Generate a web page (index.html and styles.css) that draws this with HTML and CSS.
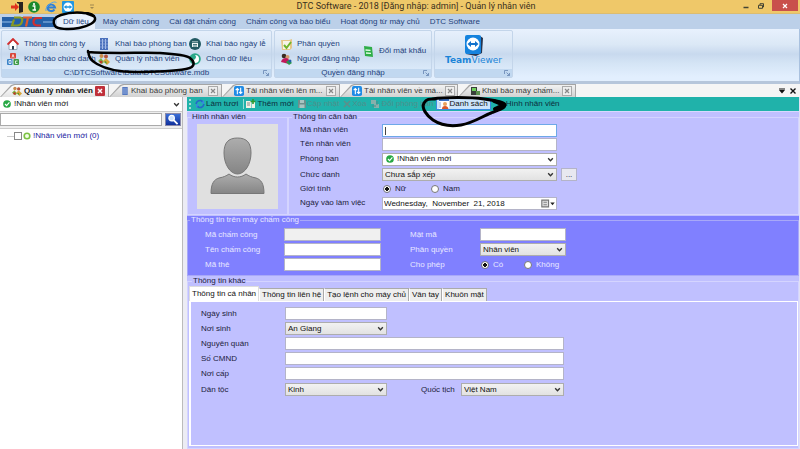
FILE: index.html
```html
<!DOCTYPE html>
<html lang="vi">
<head>
<meta charset="utf-8">
<title>DTC Software - 2018</title>
<link rel="stylesheet" href="styles.css">
</head>
<body>
<svg class="defs" aria-hidden="true">
  <symbol id="chev" viewBox="0 0 6 6"><path d="M1 2l2 2 2-2" fill="none" stroke="#333" stroke-width="1.2"/></symbol>
  <symbol id="people" viewBox="0 0 12 12"><circle cx="3.500" cy="3" r="2" fill="#c98a4a"/><circle cx="8" cy="3.500" r="2" fill="#b5523a"/><path d="M0 8l3-3 3 4-2 2z" fill="#7cb342"/><path d="M5 8l3-3 4 4-3 3z" fill="#d9a53a"/><circle cx="3" cy="9" r="1.500" fill="#c0392b"/><path d="M6 9l2-1 1 3z" fill="#4c9a2a"/></symbol>
  <symbol id="building" viewBox="0 0 12 12"><path d="M2 0h8v12H2z" fill="#4a70bc"/><path d="M4.500 1v10M7.500 1v10" stroke="#c4d6f4" stroke-width=".8"/><path d="M2 3h8M2 6h8M2 9h8" stroke="#8fabdf" stroke-width=".7"/></symbol>
  <symbol id="updown" viewBox="0 0 12 12"><rect width="12" height="12" rx="2" fill="#1f8be6"/><path d="M4 10V3M2 5l2-2 2 2M8 2v7M6 7l2 2 2-2" fill="none" stroke="#fff" stroke-width="1.300"/></symbol>
  <symbol id="xbox" viewBox="0 0 10 10"><rect x=".5" y=".5" width="9" height="9" fill="#eee" stroke="#aaa"/><path d="M3 3l4 4M7 3l-4 4" stroke="#888" stroke-width="1.200"/></symbol>
  <symbol id="ok" viewBox="0 0 10 10"><circle cx="5" cy="5" r="4.800" fill="#27a844"/><path d="M2.500 5l2 2 3.500-4" fill="none" stroke="#fff" stroke-width="1.400"/></symbol>
  <symbol id="launch" viewBox="0 0 6 6"><path d="M.5 4V.5H4M2.500 2.500l3 3M5.500 3v2.500H3" fill="none" stroke="#6f8db8" stroke-width=".9"/></symbol>
</svg>

<header class="titlebar">
  <div class="quick">
    <svg class="i12" viewBox="0 0 12 12"><path d="M6 1h6v10l-4 1V3L6 2z" fill="#2b2420"/><path d="M0 4.500h4V2l4 4-4 4V7.500H0z" fill="#e0321e"/></svg>
    <svg class="i12" viewBox="0 0 12 12"><circle cx="6" cy="6" r="5.800" fill="#1d8a2c"/><circle cx="6" cy="3" r="1.100" fill="#fff"/><path d="M4.500 5h2.300v4H8M4.500 9h3" fill="none" stroke="#fff" stroke-width="1.300"/></svg>
    <svg class="i12" viewBox="0 0 12 12"><path d="M3 6.500h7A4 4 0 0 0 2.500 6c-.3 4 4.500 5.500 7 2.500" fill="none" stroke="#2f7fd6" stroke-width="2"/><path d="M1 10C-.5 6 8-1 11.500 1.500" fill="none" stroke="#58a4e8"/></svg>
    <svg class="i12" viewBox="0 0 12 12"><rect width="12" height="12" rx="1" fill="#2196e0"/><circle cx="6" cy="6" r="4.500" fill="#fff"/><path d="M1.800 6L4.500 4v1.300h3V4l2.700 2-2.700 2V6.700h-3V8z" fill="#2196e0"/></svg>
    <svg class="i6 more" viewBox="0 0 6 6"><path d="M1 1h4" stroke="#a08850"/><path d="M1 3h4L3 5z" fill="#a08850"/></svg>
  </div>
  <h1>DTC Software - 2018 [Đăng nhập: admin] - Quản lý nhân viên</h1>
  <div class="winbtns">
    <button aria-label="Thu nhỏ"><svg class="i6" viewBox="0 0 6 6"><path d="M.5 4.500h5" stroke="#443" stroke-width="1.500"/></svg></button>
    <button aria-label="Khôi phục"><svg class="i6" viewBox="0 0 6 6"><path d="M2 2V.7h3.500V4H4.500M.5 2.300h4v3h-4z" fill="none" stroke="#443"/></svg></button>
    <button class="close" aria-label="Đóng"><svg class="i6" viewBox="0 0 6 6"><path d="M1 1l4 4M5 1L1 5" stroke="#fff" stroke-width="1.200"/></svg></button>
  </div>
</header>

<nav class="menu">
  <svg class="logo" viewBox="0 0 52 15"><path d="M0 3h52v10H0z" fill="#2460a8"/><path d="M0 8h11M41 8h11" stroke="#6f9fd4" stroke-width="1.500"/><g fill="none" stroke-width="2.200"><path d="M12 3.500h6q3 0 2 4t-5 4h-5l2-6" stroke="#8a9a20"/><path d="M21 3.500h9M26 3.500l-2 9" stroke="#e2592a"/><path d="M40 4h-5q-3 0-3.500 3.500T35 11.500h4" stroke="#d32f2f"/></g></svg>
  <a href="#" class="on">Dữ liệu</a><a href="#">Máy chấm công</a><a href="#">Cài đặt chấm công</a><a href="#">Chấm công và báo biểu</a><a href="#">Hoạt động từ máy chủ</a><a href="#">DTC Software</a>
</nav>

<section class="ribbon">
  <div class="rgroup g1">
    <div class="cmds three">
      <button><svg class="i12" viewBox="0 0 12 12"><path d="M2 6v5.500h8V6L6 2z" fill="#fff" stroke="#9ab"/><path d="M.5 6.500L6 1l5.500 5.500" fill="none" stroke="#d32f2f" stroke-width="1.800"/><path d="M5 8h2v3.500H5z" fill="#2d3e50"/></svg>Thông tin công ty</button>
      <button><svg class="i12"><use href="#building"/></svg>Khai báo phòng ban</button>
      <button><svg class="i12" viewBox="0 0 12 12"><circle cx="6" cy="6" r="6" fill="#235a63"/><rect x="3" y="3.500" width="6" height="5.500" fill="#eef6f6"/><path d="M3 4.500h6M4 6.500h4M4 8h4" stroke="#235a63" stroke-width=".8"/></svg>Khai báo ngày lễ</button>
      <button><svg class="i12" viewBox="0 0 12 12"><rect x="3" width="6" height="5.500" rx="1" fill="#d9453a"/><rect y="6" width="5.500" height="6" rx="1" fill="#3b84c8"/><rect x="6.500" y="6" width="5.500" height="6" rx="1" fill="#3d9b46"/><path d="M5 4.500L6 1.500l1 3M2 7.500v3h2v-3zM10.500 8H8.500v2.500h2" fill="none" stroke="#fff" stroke-width=".8"/></svg>Khai báo chức danh</button>
      <button><svg class="i12"><use href="#people"/></svg>Quản lý nhân viên</button>
      <button><svg class="i12" viewBox="0 0 12 12"><circle cx="6" cy="6" r="5.800" fill="#2aa889"/><path d="M6 2a4 4 0 0 1 0 8q-2-2 0-4t0-4" fill="#fff"/><circle cx="5" cy="8" r="1.500" fill="#fff"/></svg>Chọn dữ liệu</button>
    </div>
    <footer>C:\DTCSoftware\Data\DTCSoftware.mdb<svg class="i6"><use href="#launch"/></svg></footer>
  </div>
  <div class="rgroup g2">
    <div class="cmds two">
      <button><svg class="i12" viewBox="0 0 12 12"><path d="M1 2h8l3-1v9l-2 2H2z" fill="#e5c88a"/><path d="M3 3h7v8H3z" fill="#f7f4e8"/><path d="M4 7l2.500 3L11 4" fill="none" stroke="#6fb52c" stroke-width="2"/></svg>Phân quyền</button>
      <button class="mid"><svg class="i12" viewBox="0 0 12 12"><path d="M2 1l8 1 1 10-8-1z" fill="#2fae48"/><path d="M3.500 5l5 .3M4 8l5 .3" stroke="#e6ffe8" stroke-width="1.300"/></svg>Đổi mật khẩu</button>
      <button><svg class="i12" viewBox="0 0 12 12"><circle cx="4" cy="3" r="2.300" fill="#3a2a20"/><circle cx="7.500" cy="4" r="2" fill="#d69a6a"/><path d="M1 9q1-4 5-4t3 6z" fill="#c2185b"/><path d="M6 9l3-2 3 3-3 2z" fill="#2a9a4a"/><circle cx="10" cy="8" r="1.500" fill="#1f5fa8"/></svg>Người đăng nhập</button>
    </div>
    <footer>Quyền đăng nhập<svg class="i6"><use href="#launch"/></svg></footer>
  </div>
  <div class="rgroup g3">
    <button class="tv">
      <svg viewBox="0 0 20 22"><path d="M16 2l3 2-1 15-6 3-10-2z" fill="#26354f"/><rect x="1" y="1" width="16" height="19" rx="2" fill="#1583de"/><circle cx="9" cy="10" r="6.500" fill="#fff"/><path d="M3.500 10L7 7v2h4V7l3.500 3-3.500 3v-2H7v2z" fill="#1273cc"/></svg>
      <span><b>Team</b>Viewer</span>
    </button>
    <footer><svg class="i6"><use href="#launch"/></svg></footer>
  </div>
</section>

<nav class="doctabs">
  <a href="#" class="tab on"><svg class="i10"><use href="#people"/></svg><span>Quản lý nhân viên</span><svg class="i10" viewBox="0 0 10 10"><rect width="10" height="10" rx="1" fill="#c0303a"/><path d="M3 3l4 4M7 3l-4 4" stroke="#fff" stroke-width="1.500"/></svg></a>
  <a href="#" class="tab"><svg class="i8"><use href="#building"/></svg><span>Khai báo phòng ban</span><svg class="i10"><use href="#xbox"/></svg></a>
  <a href="#" class="tab"><svg class="i10"><use href="#updown"/></svg><span>Tải nhân viên lên m...</span><svg class="i10"><use href="#xbox"/></svg></a>
  <a href="#" class="tab"><svg class="i10"><use href="#updown"/></svg><span>Tải nhân viên về má...</span><svg class="i10"><use href="#xbox"/></svg></a>
  <a href="#" class="tab"><svg class="i10" viewBox="0 0 10 10"><path d="M1 1h6v8H1z" fill="#3a3f3a"/><path d="M2 2h4v3H2z" fill="#6fd05a"/><path d="M6 5h4v4H6z" fill="#5b8f4e"/></svg><span>Khai báo máy chấm...</span><svg class="i10"><use href="#xbox"/></svg></a>
  <div class="tabctl">
    <svg class="i8" viewBox="0 0 8 8"><path d="M1 2h6" stroke="#111"/><path d="M1 3h6L4 6.500z" fill="#111"/></svg>
    <svg class="i8" viewBox="0 0 8 8"><path d="M1.500 1.500l5 5M6.500 1.500l-5 5" stroke="#111" stroke-width="1.400"/></svg>
  </div>
</nav>

<main class="work">
  <aside class="side">
    <div class="combo plain icon"><svg class="lead i8"><use href="#ok"/></svg><select aria-label="Phòng ban đang xem"><option>!Nhân viên mới</option></select><svg class="arrow"><use href="#chev"/></svg></div>
    <div class="search"><input type="text" aria-label="Tìm kiếm"><button aria-label="Tìm"><svg viewBox="0 0 14 12"><circle cx="5.500" cy="4.500" r="3" fill="#cfe4ff" stroke="#fff" stroke-width="1.300"/><path d="M8 7l4 4" stroke="#fff" stroke-width="2"/></svg></button></div>
    <div class="tree"><i></i><label><input type="checkbox"><svg class="i8" viewBox="0 0 8 8"><circle cx="4" cy="4" r="2.800" fill="#f4ffe8" stroke="#7cc243" stroke-width="1.600"/></svg><span>!Nhân viên mới (0)</span></label></div>
  </aside>

  <section class="editor">
    <div class="toolbar">
      <i class="grip"></i>
      <button><svg class="i10" viewBox="0 0 10 10"><path d="M1 5q1-4 5-3.500L8 3M9 5Q8 9 4 8.500L2 7" fill="none" stroke="#2468c8" stroke-width="1.600"/><path d="M9 1v3.500H5.500zM1 9V5.500h3.500z" fill="#3a86e0"/></svg>Làm tươi</button>
      <button class="add"><svg class="i10" viewBox="0 0 10 10"><path d="M0 2h5v7H0zM5.500 3H9v6H5.500z" fill="#f2f2e6"/><path d="M1 4h3M1 6h3" stroke="#888"/><path d="M7 0v5M4.500 2.500h5" stroke="#2f9a2f" stroke-width="1.600"/></svg>Thêm mới</button>
      <button disabled><svg class="i8" viewBox="0 0 8 8"><path d="M0 0h7l1 1v7H0z" fill="#6d8f8c"/><path d="M2 0h4v3H2zM1.500 4.500h5V8h-5z" fill="#a9c4c1"/></svg>Cập nhật</button>
      <button disabled><svg class="i8" viewBox="0 0 8 8"><path d="M1 1l6 6M7 1L1 7" stroke="#5c8f8b" stroke-width="1.600"/></svg>Xóa</button>
      <button disabled><svg class="i10" viewBox="0 0 10 10"><path d="M1 1h5v4H1zM4 5h5v4H4z" fill="#86b0ac"/><path d="M2 7h4M7 2v4" stroke="#4f8a86"/></svg>Đổi phòng ban</button>
      <button class="list"><svg class="i10" viewBox="0 0 10 10"><rect width="10" height="10" fill="#fff"/><path d="M0 1h10" stroke="#3b72c4" stroke-width="2"/><path d="M1 3v6" stroke="#8aa8d8"/><circle cx="6" cy="5" r="2" fill="#e9a15a"/><path d="M3 10q0-3 3-3t3.500 3z" fill="#d9582a"/></svg>Danh sách</button>
      <button><svg class="i8" viewBox="0 0 10 10"><path d="M1 2h7v7H1z" fill="#44605e"/><path d="M3 3h3v3H3z" fill="#86a5a2"/></svg>Hình nhân viên</button>
    </div>

    <div class="top">
      <fieldset class="photo"><legend>Hình nhân viên</legend>
        <svg viewBox="0 0 81 85" role="img" aria-label="Ảnh nhân viên"><defs><linearGradient id="g" x2="0" y2="1"><stop stop-color="#adadad"/><stop offset="1" stop-color="#858585"/></linearGradient></defs><path d="M0 0h81v85H0z" fill="#e0e0e0"/><g fill="url(#g)" stroke="#777"><path d="M40.500 14C31 14 27 19 27 29c0 11 6 21 13.500 21S54 40 54 29c0-10-4-15-13.500-15z"/><path d="M14 69.500c0-10 3-14 8-15.500 5-1 7-2 10-4 5 4 12 4 17 0 3 2 5 3 10 4 5 1.500 8 5.500 8 15.500z"/></g></svg>
      </fieldset>
      <fieldset class="basic"><legend>Thông tin căn bản</legend>
        <div class="grid">
          <label for="ma">Mã nhân viên</label><input id="ma" class="focus" type="text">
          <label for="ten">Tên nhân viên</label><input id="ten" type="text">
          <label for="pb">Phòng ban</label><div class="combo plain icon"><svg class="lead i8"><use href="#ok"/></svg><select id="pb"><option>!Nhân viên mới</option></select><svg class="arrow"><use href="#chev"/></svg></div>
          <label for="cd">Chức danh</label><div class="combo"><select id="cd"><option>Chưa sắp xếp</option></select><svg class="arrow"><use href="#chev"/></svg></div><button class="dots">...</button>
          <span>Giới tính</span><div class="radios"><label><input type="radio" name="gt" checked>Nữ</label><label><input type="radio" name="gt">Nam</label></div>
          <label for="ngay">Ngày vào làm việc</label><div class="date"><input id="ngay" type="text" value="Wednesday,  November  21, 2018"><button aria-label="Chọn ngày"><svg viewBox="0 0 12 8"><path d="M.5 1h6v6h-6z" fill="#ddd" stroke="#777"/><path d="M2 3h3M2 5h3" stroke="#999"/><path d="M8 3h4l-2 2.500z" fill="#222"/></svg></button></div>
        </div>
      </fieldset>
    </div>

    <fieldset class="machine"><legend>Thông tin trên máy chấm công</legend>
      <div class="cols">
        <div class="grid left">
          <label for="mcc">Mã chấm công</label><input id="mcc" type="text" disabled>
          <label for="tcc">Tên chấm công</label><input id="tcc" type="text">
          <label for="mt">Mã thẻ</label><input id="mt" type="text">
        </div>
        <div class="grid right">
          <label for="mm">Mật mã</label><input id="mm" type="text">
          <label for="pq">Phân quyền</label><div class="combo"><select id="pq"><option>Nhân viên</option></select><svg class="arrow"><use href="#chev"/></svg></div>
          <span>Cho phép</span><div class="radios"><label><input type="radio" name="cp" checked>Có</label><label><input type="radio" name="cp">Không</label></div>
        </div>
      </div>
    </fieldset>

    <fieldset class="other"><legend>Thông tin khác</legend>
      <div class="subtabs"><button class="on">Thông tin cá nhân</button><button>Thông tin liên hệ</button><button>Tạo lệnh cho máy chủ</button><button>Vân tay</button><button>Khuôn mặt</button></div>
      <div class="page">
        <div class="grid">
          <label for="ns">Ngày sinh</label><input id="ns" type="text">
          <label for="nsi">Nơi sinh</label><div class="combo"><select id="nsi"><option>An Giang</option></select><svg class="arrow"><use href="#chev"/></svg></div>
          <label for="nq">Nguyên quán</label><input id="nq" class="wide" type="text">
          <label for="cm">Số CMND</label><input id="cm" class="wide" type="text">
          <label for="nc">Nơi cấp</label><input id="nc" class="wide" type="text">
          <label for="dt">Dân tộc</label><div class="combo"><select id="dt"><option>Kinh</option></select><svg class="arrow"><use href="#chev"/></svg></div>
          <label for="qt" class="qt">Quốc tịch</label><div class="combo"><select id="qt"><option>Việt Nam</option></select><svg class="arrow"><use href="#chev"/></svg></div>
        </div>
      </div>
    </fieldset>
  </section>
</main>

<svg class="ink" width="520" height="130" viewBox="0 0 520 130" aria-hidden="true"><g fill="none" stroke="#000" stroke-width="2.500" stroke-linecap="round" stroke-linejoin="round"><path d="M93 16C84 11 70 12 61 15S53 23 55 26s14 4 24 2 17-6 16-10-6-5-12-5"/><path d="M88 51c1 6 2 9 9 13s20 8 38 8 40-1 51-3 8-8 4-11-14-4-30-5-44 1-72-1"/><path d="M432 99c14-2 38-2 52 0s21 3 21 6-6 5-14 8-18 10-30 12-22-1-28-5-12-12-9-17 7-4 11-4" stroke-width="3"/><path d="M494 101l10 4-9 4" stroke-width="4"/></g></svg>
</body>
</html>
```
FILE: styles.css
```css
* { box-sizing: border-box; }
body { margin: 0; min-height: 100vh; display: flex; flex-direction: column; position: relative; background: #fff; color: #1c1c3c; font: 8px/10px "Liberation Sans", sans-serif; overflow: hidden; }
button, input, select { font: inherit; color: inherit; margin: 0; padding: 0; border: 0; background: none; min-width: 0; }
a { color: inherit; text-decoration: none; }
svg { flex: none; display: block; }
.defs { position: absolute; width: 0; height: 0; }
.ink { position: absolute; left: 0; top: 0; pointer-events: none; }
.i6 { width: 6px; height: 6px; }
.i8 { width: 8px; height: 8px; }
.i10 { width: 10px; height: 10px; }
.i12 { width: 12px; height: 12px; }

.titlebar { height: 14px; display: grid; grid-template-columns: 1fr auto 1fr; background: #efc869; border-bottom: 1px solid #dcbc70; }
.quick { display: flex; gap: 5px; padding-left: 11px; align-items: center; }
.quick .more { margin-left: 10px; }
.titlebar h1 { margin: 0; padding-left: 32px; font: 9px/13px Roboto, sans-serif; color: #3a3020; white-space: nowrap; }
.winbtns { display: flex; justify-content: flex-end; align-items: flex-start; padding-right: 2px; }
.winbtns button { width: 15px; height: 11px; display: flex; align-items: center; justify-content: center; }
.winbtns .close { width: 26px; margin-left: 4px; background: #c9504c; }

.menu { height: 15px; display: flex; align-items: stretch; background: #bcd0e9; color: #24427c; white-space: nowrap; line-height: 15px; }
.logo { width: 52px; height: 15px; margin: 0 3px 0 2px; }
.menu a { padding: 0 5px; }
.menu .on { background: #e9f1fc; border-radius: 2px 2px 0 0; padding: 0 6px; margin-right: 3px; }

.ribbon { display: flex; gap: 2px; height: 55px; padding: 1px 0 3px 1px; color: #24427c; background: linear-gradient(#e8f1fd 0, #dbe8f6 30%, #c8d9ee 48%, #d4e4f5 65%, #e2effe 92%); border-bottom: 3px solid #b6c6db; border-right: 1px solid #a9c1df; }
.rgroup { display: flex; flex-direction: column; border: 1px solid #c3d5ea; border-radius: 2px; }
.g1 { width: 271px; }
.g2 { width: 158px; }
.g3 { width: 79px; }
.rgroup footer { height: 8px; line-height: 8px; background: #c1d8f0; display: flex; align-items: center; justify-content: center; position: relative; }
.rgroup footer svg { position: absolute; right: 2px; top: 1px; }
.cmds { flex: 1; display: grid; grid-template-rows: 15px 15px; padding: 5px 0 0 5px; align-content: start; }
.cmds button { display: flex; align-items: center; gap: 5px; white-space: nowrap; }
.three { grid-template-columns: 91px 91px 80px; }
.two { grid-template-columns: 82px 64px; }
.two .mid { grid-row: span 2; }
.tv { flex: 1; display: flex; flex-direction: column; align-items: center; padding-top: 3px; font: 9px/9px "DejaVu Sans", sans-serif; color: #1b84d8; }
.tv svg { width: 20px; height: 22px; }

.doctabs { height: 13px; display: flex; background: #f5f5f5; color: #3a3a3a; position: relative; }
.tab { width: 118px; display: flex; align-items: center; gap: 2px; padding: 0 4px 0 12px; position: relative; z-index: 0; white-space: nowrap; }
.tab span { flex: 1; }
.tab::before, .tab::after { content: ""; position: absolute; inset: 0; z-index: -2; background: #a5a5a5; clip-path: polygon(0 100%, 11px 1px, 14px 0, 100% 0, 100% 100%); }
.tab::after { inset: 1px 1px 0 1px; z-index: -1; background: linear-gradient(#f2f2f2, #d2d2d2); }
.tab.on::after { background: linear-gradient(#fff, #e4e4e4); }
.tab.on { color: #111; font-weight: bold; width: 109px; }
.tab:nth-child(2) { width: 113px; }
.tabctl { margin-left: auto; display: flex; gap: 3px; padding-right: 3px; align-items: center; }

.work { flex: 1; display: flex; gap: 4px; background: #ececf4; }
.side { width: 183px; background: #fff; border-right: 1px solid #bbb; color: #222; }
.side .combo { height: 15px; border: 0; border-bottom: 1px solid #ccc; }
.search { height: 17px; display: flex; gap: 3px; padding: 1px 1px 2px 0; background: #eee; border-bottom: 1px solid #ccc; }
.search input { flex: 1; background: #fff; border: 1px solid #aaa; }
.search button { width: 16px; height: 13px; background: linear-gradient(#3a6fd8, #10309c); border: 1px solid #88a; }
.search svg { width: 14px; height: 11px; }
.tree { display: flex; align-items: center; padding: 2px 0 0 7px; color: #2020a0; }
.tree i { width: 7px; border-top: 1px solid #ccc; }
.tree label { display: flex; align-items: center; gap: 1px; }
.tree span { padding-left: 1px; }
.tree input { appearance: none; width: 8px; height: 8px; border: 1px solid #888; background: #fff; }

.combo { display: grid; grid-template-columns: 1fr 12px; align-items: center; background: linear-gradient(#f2f2f2, #e2e2e2); border: 1px solid #adadad; color: #111; height: 13px; }
.combo.plain { background: #fff; }
.combo select { appearance: none; grid-area: 1 / 1 / 2 / 3; width: 100%; padding-left: 2px; outline: 0; }
.combo .arrow { grid-area: 1 / 2; width: 7px; height: 7px; pointer-events: none; justify-self: center; }
.combo .lead { grid-area: 1 / 1; margin-left: 3px; pointer-events: none; }
.combo.icon select { padding-left: 14px; }

.editor { flex: 1; display: flex; flex-direction: column; background: #c0c0ff; min-width: 0; border-right: 1px solid #e0e0f4; }
.toolbar { height: 15px; background: #20b2aa; border-bottom: 1px solid #d8d8ff; display: flex; align-items: center; color: #0c2c3c; }
.toolbar button { display: flex; align-items: center; gap: 1px; height: 14px; padding: 0 2px; white-space: nowrap; }
.toolbar button:disabled { color: #4f8f8b; }
.grip { height: 10px; margin: 0 2px; border-left: 2px dotted #a8dcd8; }
.toolbar .add { border-left: 1px solid #9adcd6; height: 10px; margin-left: 3px; }
.toolbar .list { border: 1px solid #3a8ae0; background: #cce4fb; height: 12px; color: #111; margin-right: 4px; }

fieldset { margin: 0; padding: 0; border: 1px solid #d4d4ff; min-width: 0; }
legend { margin-left: 3px; padding: 0 1px; height: 10px; }
fieldset input[type="text"] { background: #fff; border: 1px solid #b4b4c8; height: 13px; padding-left: 2px; color: #111; }
fieldset input[type="text"]:disabled { background: #f0f0f0; }
fieldset input.focus { border-color: #6ea8e8; background: linear-gradient(#444, #444) 2px 2px / 1px 8px no-repeat #fff; }
.grid { display: grid; align-items: center; white-space: nowrap; }
.top { display: flex; height: 103px; }
.photo { width: 101px; }
.photo svg { width: 81px; height: 85px; margin: 2px 0 0 9px; }
.basic { flex: 1; }
.basic .grid { grid-template-columns: 82px 175px 20px; grid-template-rows: 14px 14px 16px 15px 13px 16px; padding: 1px 0 0 11px; }
.basic .grid > label, .basic .grid > span { grid-column: 1; }
.dots { background: #e8e8f0; border: 1px solid #b4b4c8; height: 13px; margin-left: 4px; line-height: 8px; }
.radios { display: flex; }
.radios label { display: flex; align-items: center; gap: 4px; width: 48px; }
.radios input { appearance: none; width: 8px; height: 8px; border: 1px solid #777; border-radius: 50%; background: #fff; margin-left: 1px; }
.radios input:checked { background: radial-gradient(#111 45%, #fff 50%); }
.date { display: flex; height: 13px; background: #fff; border: 1px solid #b4b4c8; }
fieldset .date input { flex: 1; border: 0; height: 11px; padding-left: 1px; white-space: pre; }
.date svg { width: 14px; height: 9px; margin-right: 1px; }

.machine { background: #8080ff; color: #e8e8ff; height: 61px; border-color: #a8a8f8; box-shadow: 0 -4px 0 #8080ff; }
.machine legend { margin-left: 2px; }
.cols { display: flex; gap: 29px; padding: 2px 0 0 17px; }
.machine .grid { grid-auto-rows: 15px; }
.machine .left { grid-template-columns: 79px 97px; }
.machine .right { grid-template-columns: 70px 86px; }

.other { flex: 1; display: flex; flex-direction: column; border-color: #d4d4ff; padding: 0 0 2px 1px; }
.subtabs { display: flex; align-items: flex-end; height: 15px; color: #111; }
.subtabs button { height: 13px; padding: 0 2px; background: #eee; border: 1px solid #aaa; border-left-color: #fff; border-bottom: 0; white-space: nowrap; }
.subtabs .on { background: #fff; height: 15px; border-color: #ddd; }
.page { flex: 1; border: 1px solid #fff; border-left-width: 2px; }
.page .grid { grid-template-columns: 84px 102px 34px 40px 103px; grid-template-rows: repeat(5, 15px) 17px; padding: 4px 0 0 10px; }
.page .grid > label { grid-column: 1; }
.page .grid > .qt { grid-column: 4; }
.page .wide { grid-column: 2 / -1; }
```
